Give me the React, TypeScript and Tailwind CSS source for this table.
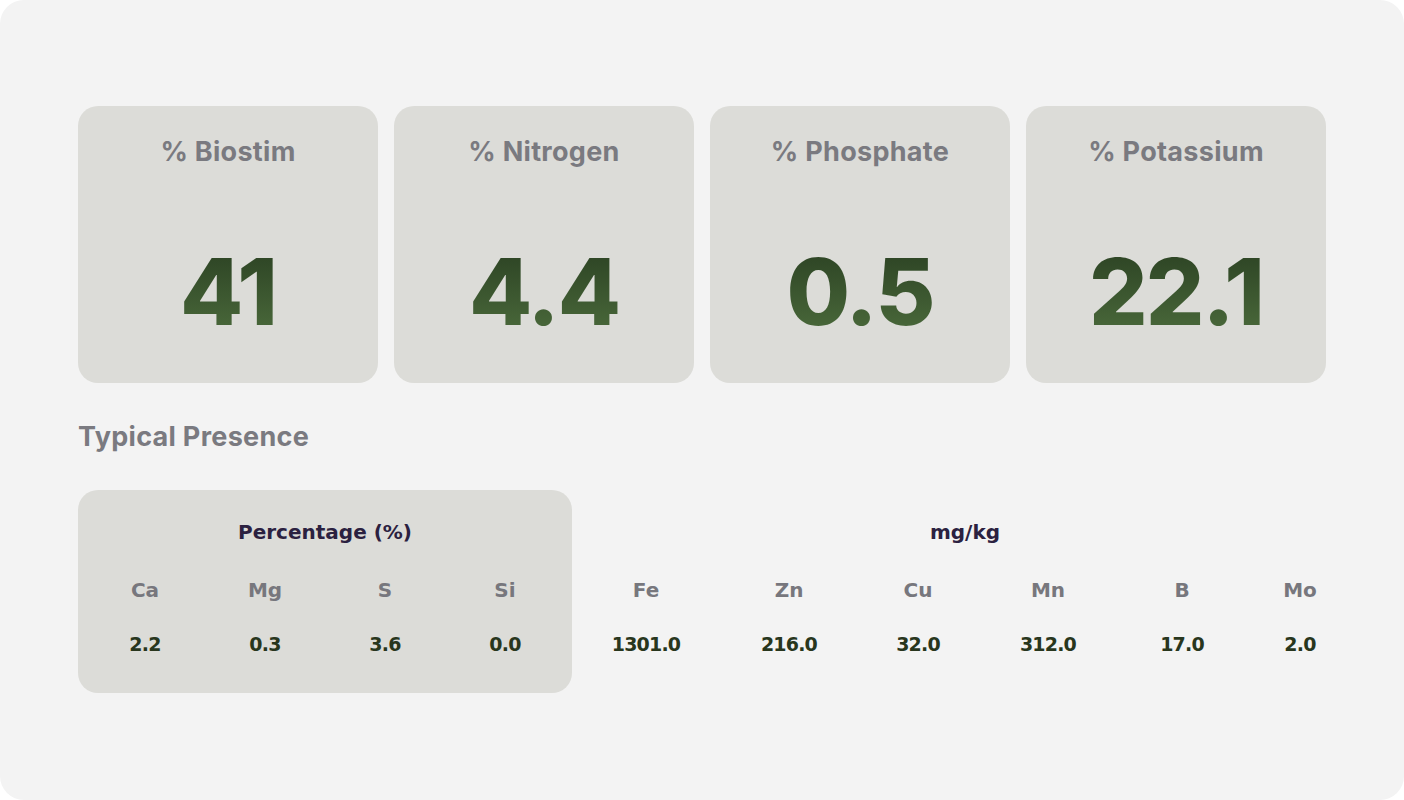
const stats = [
  { label: '% Biostim', value: '41' },
  { label: '% Nitrogen', value: '4.4' },
  { label: '% Phosphate', value: '0.5' },
  { label: '% Potassium', value: '22.1' },
]

const percent = [
  { el: 'Ca', v: '2.2' },
  { el: 'Mg', v: '0.3' },
  { el: 'S', v: '3.6' },
  { el: 'Si', v: '0.0' },
]

const mgkg = [
  { el: 'Fe', v: '1301.0' },
  { el: 'Zn', v: '216.0' },
  { el: 'Cu', v: '32.0' },
  { el: 'Mn', v: '312.0' },
  { el: 'B', v: '17.0' },
  { el: 'Mo', v: '2.0' },
]

const inter = "font-['Inter',sans-serif]"
const geo = "font-['DejaVu_Sans',sans-serif]"

function Cell({ el, v }: { el: string; v: string }) {
  return (
    <div className="flex flex-col items-center">
      <span className={`${geo} text-[20px] leading-6 font-semibold text-[#77777d]`}>{el}</span>
      <span className={`${geo} mt-[30px] text-[19px] leading-6 font-bold text-[#28361d] tracking-[-0.8px]`}>{v}</span>
    </div>
  )
}

export default function App() {
  return (
    <div className="bg-white min-h-[800px]">
      <div className="w-[1404px] h-[800px] bg-[#f3f3f3] rounded-[24px] px-[78px] pt-[106px]">
        {/* stat cards */}
        <div className="grid grid-cols-4 gap-4">
          {stats.map(s => (
            <div key={s.label} className="h-[277px] bg-[#dcdcd8] rounded-[20px] flex flex-col items-center pt-[30px]">
              <h3 className={`${inter} text-[27px] leading-8 font-bold text-[#7a7a80] tracking-[0.3px]`}>{s.label}</h3>
              <p className={`${inter} mt-[74px] text-[92px] leading-[100px] font-extrabold tracking-[-2px] bg-linear-to-b from-[#2a4022] to-[#4d6d3d] bg-clip-text text-transparent`}>
                {s.value}
              </p>
            </div>
          ))}
        </div>

        <h2 className={`${inter} mt-[38px] text-[27px] leading-8 font-bold text-[#7a7a80] tracking-[0.3px]`}>Typical Presence</h2>

        {/* typical presence table */}
        <div className="mt-[37px] flex">
          <div className="shrink-0 w-[494px] h-[203px] bg-[#dcdcd8] rounded-[20px] px-[32px] pt-[30px]">
            <p className={`${geo} text-center text-[20px] leading-6 font-bold text-[#2b2140]`}>Percentage (%)</p>
            <div className="mt-[34px] flex justify-between">
              {percent.map(p => (
                <div key={p.el} className="w-[70px]">
                  <Cell el={p.el} v={p.v} />
                </div>
              ))}
            </div>
          </div>

          <div className="shrink-0 pt-[30px] ml-[9px]">
            <p className={`${geo} text-center pr-[14px] text-[20px] leading-6 font-bold text-[#2b2140]`}>mg/kg</p>
            <div className="mt-[34px] grid grid-cols-[130px_156px_102px_158px_110px_126px]">
              {mgkg.map(p => (
                <Cell key={p.el} el={p.el} v={p.v} />
              ))}
            </div>
          </div>
        </div>
      </div>
    </div>
  )
}
